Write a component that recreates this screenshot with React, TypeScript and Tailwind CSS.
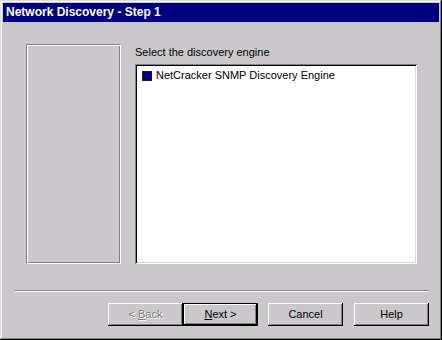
const face = 'bg-[#cac8ca]';

function Btn({ children, primary, disabled }: { children: React.ReactNode; primary?: boolean; disabled?: boolean }) {
  const bevel = 'shadow-[inset_-1px_-1px_#000,inset_1px_1px_#fff,inset_-2px_-2px_#808080]';
  return (
    <div className={`w-[75px] h-[23px] ${primary ? 'border border-black' : ''}`}>
      <div
        className={`w-full h-full flex items-center justify-center text-[11px] leading-[13px] ${bevel} ${
          disabled ? 'text-[#808080] [text-shadow:1px_1px_0_#fff]' : 'text-black'
        }`}
      >
        <span>{children}</span>
      </div>
    </div>
  );
}

export default function App() {
  return (
    <div
      className={`w-[442px] h-[340px] ${face} p-[3px] flex flex-col shadow-[inset_-1px_-1px_#000,inset_1px_1px_#dcdcdc,inset_-2px_-2px_#808080,inset_2px_2px_#fff]`}
      style={{ fontFamily: '"Liberation Sans", Arial, sans-serif' }}
    >
      <div className="h-[19px] bg-[#000080] text-white font-bold text-[12px] leading-[19px] pl-[3px]">
        Network Discovery - Step 1
      </div>

      <div className="flex pt-[22px] pl-[23px]">
        <div className="w-[95px] h-[220px] border border-t-[#808080] border-l-[#808080] border-b-white border-r-white shadow-[inset_1px_1px_#fff,inset_-1px_-1px_#808080]" />
        <div className="ml-[14px] flex flex-col">
          <div className="mt-[2px] h-[13px] text-[11px] leading-[13px] text-black">Select the discovery engine</div>
          <div className="mt-[5px] w-[282px] h-[200px] bg-white shadow-[inset_1px_1px_#808080,inset_-1px_-1px_#fff,inset_2px_2px_#000,inset_-2px_-2px_#dcdcdc] p-[2px]">
            <div className="flex items-center pt-[3px] pl-[5px]">
              <div className="w-[10px] h-[10px] bg-[#000080] border border-[#1a1a40]" />
              <span className="ml-[4px] text-[11px] leading-[13px] text-black">NetCracker SNMP Discovery Engine</span>
            </div>
          </div>
        </div>
      </div>

      <div className="mt-[26px] ml-[12px] w-[413px] h-[2px] border-t border-t-[#808080] border-b border-b-white" />

      <div className="mt-[11px] flex justify-end pr-[10px]">
        <Btn disabled>
          &lt; <u>B</u>ack
        </Btn>
        <Btn primary>
          <u>N</u>ext &gt;
        </Btn>
        <div className="w-[10px]" />
        <Btn>Cancel</Btn>
        <div className="w-[11px]" />
        <Btn>Help</Btn>
      </div>
    </div>
  );
}
